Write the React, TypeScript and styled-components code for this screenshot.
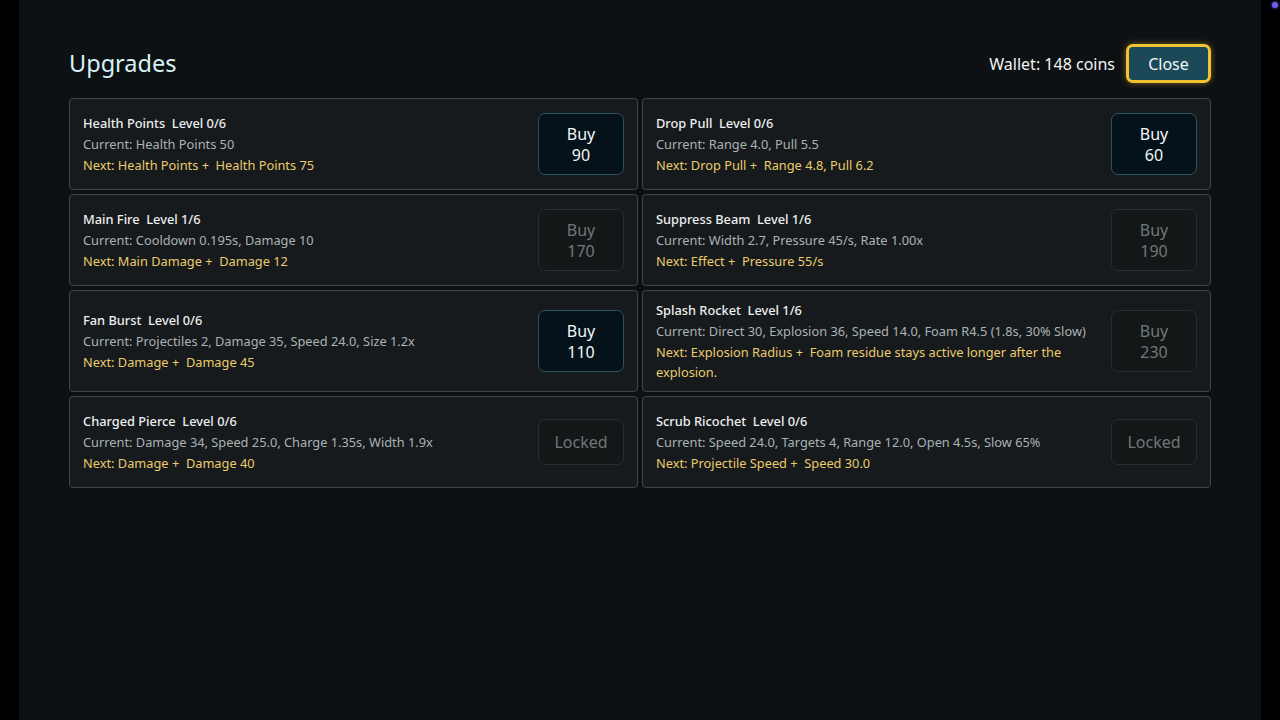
import React from "react";
import styled, { createGlobalStyle } from "styled-components";

const Global = createGlobalStyle`
  html, body { margin: 0; padding: 0; background: #000; }
  body { font-family: "Noto Sans", "Open Sans", sans-serif; }
  * { box-sizing: border-box; }
`;

const Screen = styled.div`
  width: 1280px;
  height: 720px;
  background: #000;
  position: relative;
  overflow: hidden;
`;

const Panel = styled.div`
  margin-left: 19px;
  width: 1242px;
  height: 720px;
  background: #0d1113;
  padding: 44px 50px 0 50px;
`;

const Header = styled.div`
  display: flex;
  align-items: center;
  justify-content: space-between;
  height: 39px;
  margin-bottom: 15px;
`;

const Title = styled.h1`
  margin: 0;
  font-size: 23.5px;
  font-weight: 400;
  color: #d9f1f4;
  line-height: 1;
  padding-top: 1px;
`;

const HeaderRight = styled.div`
  display: flex;
  align-items: center;
  gap: 11px;
`;

const Wallet = styled.span`
  font-size: 16px;
  color: #f2f4f4;
  font-weight: 400;
`;

const CloseButton = styled.button`
  width: 85px;
  height: 39px;
  border: 3px solid #f3c232;
  border-radius: 7px;
  background: #1b4957;
  color: #eef6f8;
  font-family: inherit;
  font-size: 16px;
  box-shadow: 0 0 6px rgba(243, 194, 50, 0.45);
  padding: 0;
`;

const Grid = styled.div`
  display: grid;
  grid-template-columns: 1fr 1fr;
  gap: 4px;
`;

const Card = styled.div`
  display: flex;
  align-items: center;
  justify-content: space-between;
  gap: 16px;
  min-height: 92px;
  background: #161a1c;
  border: 1px solid #3b4849;
  border-radius: 4px;
  padding: 9px 13px;
`;

const Info = styled.div`
  display: flex;
  flex-direction: column;
  gap: 1px;
  font-size: 12.8px;
  line-height: 20px;
`;

const Name = styled.div`
  color: #eceff0;
  font-weight: 500;
  white-space: pre;
`;

const Current = styled.div`
  color: #a9b3b4;
`;

const Next = styled.div`
  color: #ebcb6c;
  white-space: pre-wrap;
`;

const BuyButton = styled.button<{ $state: "active" | "disabled" | "locked" }>`
  flex: 0 0 86px;
  width: 86px;
  height: ${(p) => (p.$state === "locked" ? "46px" : "62px")};
  border-radius: 7px;
  font-family: inherit;
  font-size: 16px;
  line-height: 21px;
  padding: 1px 0 0;
  display: flex;
  flex-direction: column;
  align-items: center;
  justify-content: center;
  background: ${(p) => (p.$state === "active" ? "#06121a" : "#131718")};
  border: 1px solid ${(p) => (p.$state === "active" ? "#2c5360" : "#272e30")};
  color: ${(p) => (p.$state === "active" ? "#f2f6f7" : "#6f7879")};
`;

const Dot = styled.div`
  position: absolute;
  left: 1272px;
  top: 2px;
  width: 6px;
  height: 6px;
  border-radius: 50%;
  background: #6a5cf0;
  box-shadow: 0 0 3px #6a5cf0;
`;

type Item = {
  name: string;
  level: string;
  current: string;
  next: string;
  state: "active" | "disabled" | "locked";
  price?: number;
};

const items: Item[] = [
  { name: "Health Points", level: "Level 0/6", current: "Current: Health Points 50", next: "Next: Health Points +  Health Points 75", state: "active", price: 90 },
  { name: "Drop Pull", level: "Level 0/6", current: "Current: Range 4.0, Pull 5.5", next: "Next: Drop Pull +  Range 4.8, Pull 6.2", state: "active", price: 60 },
  { name: "Main Fire", level: "Level 1/6", current: "Current: Cooldown 0.195s, Damage 10", next: "Next: Main Damage +  Damage 12", state: "disabled", price: 170 },
  { name: "Suppress Beam", level: "Level 1/6", current: "Current: Width 2.7, Pressure 45/s, Rate 1.00x", next: "Next: Effect +  Pressure 55/s", state: "disabled", price: 190 },
  { name: "Fan Burst", level: "Level 0/6", current: "Current: Projectiles 2, Damage 35, Speed 24.0, Size 1.2x", next: "Next: Damage +  Damage 45", state: "active", price: 110 },
  { name: "Splash Rocket", level: "Level 1/6", current: "Current: Direct 30, Explosion 36, Speed 14.0, Foam R4.5 (1.8s, 30% Slow)", next: "Next: Explosion Radius +  Foam residue stays active longer after the explosion.", state: "disabled", price: 230 },
  { name: "Charged Pierce", level: "Level 0/6", current: "Current: Damage 34, Speed 25.0, Charge 1.35s, Width 1.9x", next: "Next: Damage +  Damage 40", state: "locked" },
  { name: "Scrub Ricochet", level: "Level 0/6", current: "Current: Speed 24.0, Targets 4, Range 12.0, Open 4.5s, Slow 65%", next: "Next: Projectile Speed +  Speed 30.0", state: "locked" },
];

export default function App() {
  return (
    <Screen>
      <Global />
      <Panel>
        <Header>
          <Title>Upgrades</Title>
          <HeaderRight>
            <Wallet>Wallet: 148 coins</Wallet>
            <CloseButton>Close</CloseButton>
          </HeaderRight>
        </Header>
        <Grid>
          {items.map((it) => (
            <Card key={it.name}>
              <Info>
                <Name>{`${it.name}  ${it.level}`}</Name>
                <Current>{it.current}</Current>
                <Next>{it.next}</Next>
              </Info>
              <BuyButton $state={it.state}>
                {it.state === "locked" ? (
                  <span>Locked</span>
                ) : (
                  <>
                    <span>Buy</span>
                    <span>{it.price}</span>
                  </>
                )}
              </BuyButton>
            </Card>
          ))}
        </Grid>
      </Panel>
      <Dot />
    </Screen>
  );
}
